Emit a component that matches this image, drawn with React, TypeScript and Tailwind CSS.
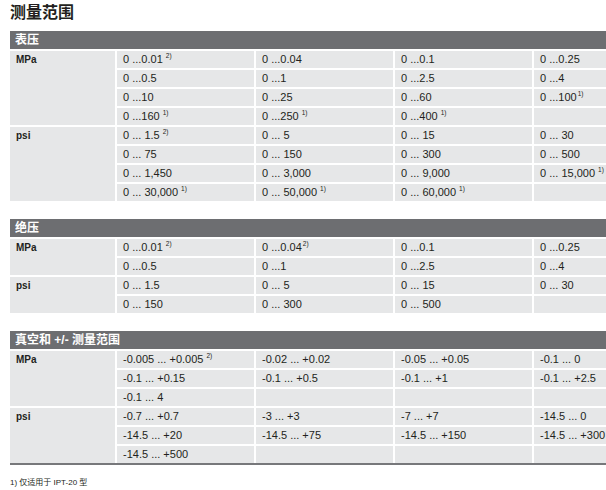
import { Fragment } from "react";

type Group = { unit: string; rows: string[][] };
type Block = { title: string; groups: Group[]; last?: boolean };

// "|" = note after a space, "~" = note set tight against the value
const BLOCKS: Block[] = [
  {
    title: "表压",
    groups: [
      {
        unit: "MPa",
        rows: [
          ["0 ...0.01|2)", "0 ...0.04", "0 ...0.1", "0 ...0.25"],
          ["0 ...0.5", "0 ...1", "0 ...2.5", "0 ...4"],
          ["0 ...10", "0 ...25", "0 ...60", "0 ...100~1)"],
          ["0 ...160|1)", "0 ...250|1)", "0 ...400|1)", ""],
        ],
      },
      {
        unit: "psi",
        rows: [
          ["0 ... 1.5|2)", "0 ... 5", "0 ... 15", "0 ... 30"],
          ["0 ... 75", "0 ... 150", "0 ... 300", "0 ... 500"],
          ["0 ... 1,450", "0 ... 3,000", "0 ... 9,000", "0 ... 15,000|1)"],
          ["0 ... 30,000|1)", "0 ... 50,000|1)", "0 ... 60,000|1)", ""],
        ],
      },
    ],
  },
  {
    title: "绝压",
    groups: [
      {
        unit: "MPa",
        rows: [
          ["0 ...0.01|2)", "0 ...0.04~2)", "0 ...0.1", "0 ...0.25"],
          ["0 ...0.5", "0 ...1", "0 ...2.5", "0 ...4"],
        ],
      },
      {
        unit: "psi",
        rows: [
          ["0 ... 1.5", "0 ... 5", "0 ... 15", "0 ... 30"],
          ["0 ... 150", "0 ... 300", "0 ... 500", ""],
        ],
      },
    ],
  },
  {
    title: "真空和 +/- 测量范围",
    last: true,
    groups: [
      {
        unit: "MPa",
        rows: [
          ["-0.005 ... +0.005|2)", "-0.02 ... +0.02", "-0.05 ... +0.05", "-0.1 ... 0"],
          ["-0.1 ... +0.15", "-0.1 ... +0.5", "-0.1 ... +1", "-0.1 ... +2.5"],
          ["-0.1 ... 4", "", "", ""],
        ],
      },
      {
        unit: "psi",
        rows: [
          ["-0.7 ... +0.7", "-3 ... +3", "-7 ... +7", "-14.5 ... 0"],
          ["-14.5 ... +20", "-14.5 ... +75", "-14.5 ... +150", "-14.5 ... +300"],
          ["-14.5 ... +500", "", "", ""],
        ],
      },
    ],
  },
];

function Value({ text }: { text: string }) {
  const tight = text.includes("~");
  const [v, note] = text.split(tight ? "~" : "|");
  return (
    <div className="bg-[#e6e7e8] pl-[6px] leading-[17px] text-[11px] whitespace-nowrap">
      {v}
      {note && (
        <sup className={`${tight ? "ml-[1px]" : "ml-[3px]"} text-[6.5px] align-[2px]`}>{note}</sup>
      )}
    </div>
  );
}

function RangeTable({ block }: { block: Block }) {
  return (
    <div className="w-[661px]">
      <div className="h-[18px] bg-[#6d6e71] pl-[5px] text-[12px] font-bold leading-[18px] text-white">
        {block.title}
      </div>
      <div className="mt-[2px] grid grid-cols-[105px_137px_137px_137px_137px] auto-rows-[17px] gap-[2px]">
        {block.groups.map((g) => (
          <Fragment key={g.unit}>
            <div
              className="bg-[#e6e7e8] pl-[6px] text-[10px] font-bold leading-[17px]"
              style={{ gridRow: `span ${g.rows.length}` }}
            >
              {g.unit}
            </div>
            {g.rows.map((r, i) =>
              r.map((c, j) => <Value key={`${g.unit}-${i}-${j}`} text={c} />)
            )}
          </Fragment>
        ))}
      </div>
      {block.last && <div className="h-[2px] bg-[#77787b]" />}
    </div>
  );
}

export default function App() {
  return (
    <div className="w-[606px] h-[490px] overflow-hidden bg-white pl-[10px] text-[#231f20] font-['Liberation_Sans','Noto_Sans_CJK_SC',sans-serif]">
      <h1 className="pt-[3px] text-[16px] font-bold leading-[20px]">测量范围</h1>
      <div className="mt-[8px]">
        <RangeTable block={BLOCKS[0]} />
      </div>
      <div className="mt-[18px]">
        <RangeTable block={BLOCKS[1]} />
      </div>
      <div className="mt-[18px]">
        <RangeTable block={BLOCKS[2]} />
      </div>
      <p className="mt-[13px] text-[8px] leading-[10px]">1) 仅适用于 IPT-20 型</p>
    </div>
  );
}
